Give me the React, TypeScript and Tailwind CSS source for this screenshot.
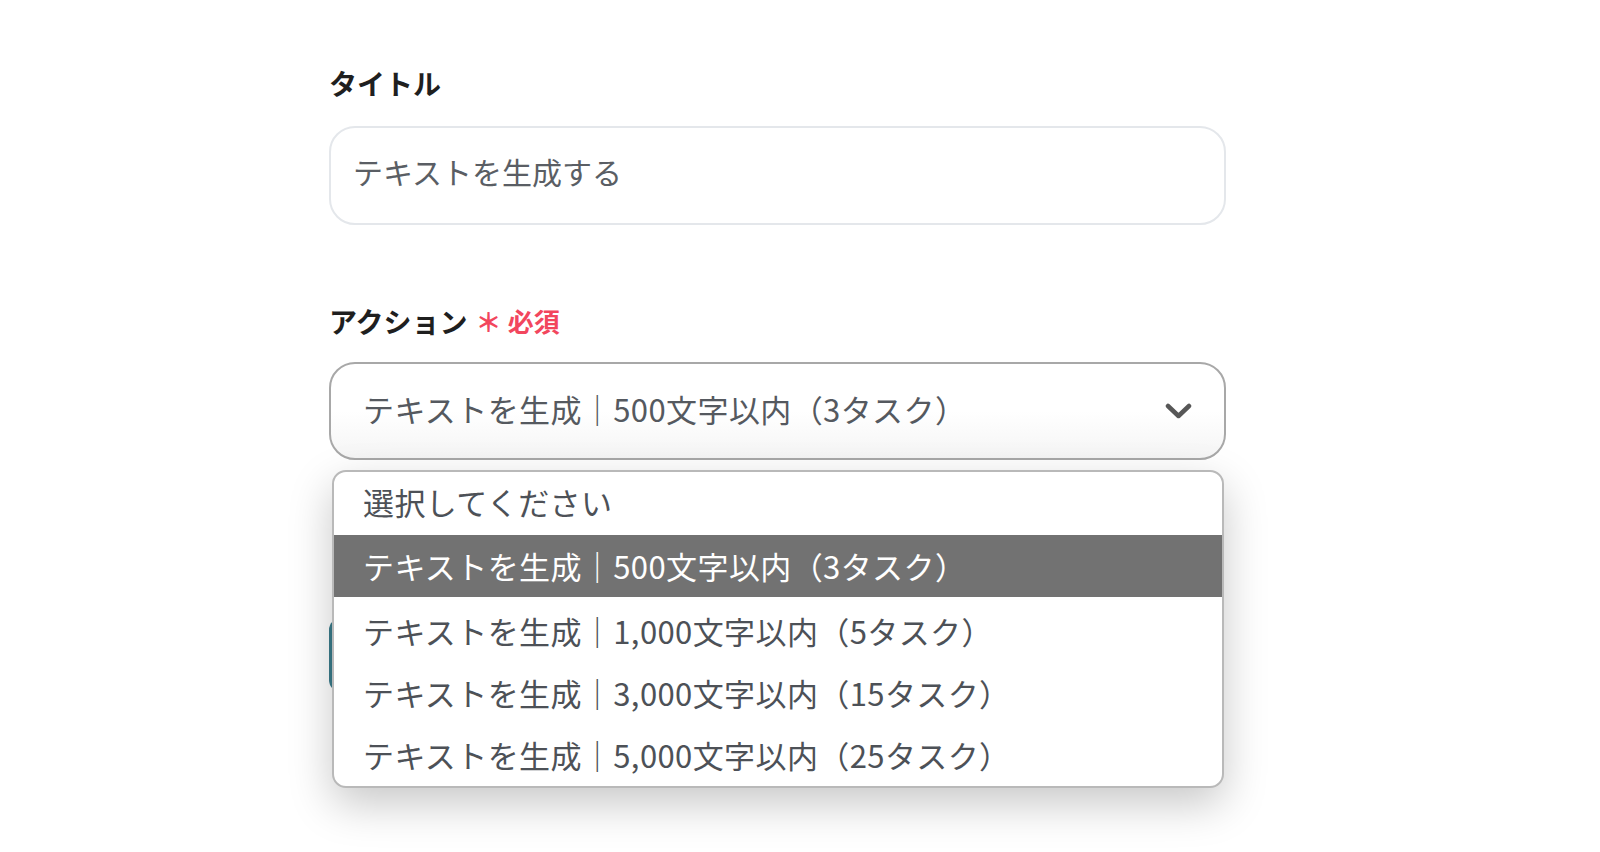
const jp = { fontFamily: '"Noto Sans CJK JP", "Noto Sans", sans-serif' };

const options = [
  "選択してください",
  "テキストを生成｜500文字以内（3タスク）",
  "テキストを生成｜1,000文字以内（5タスク）",
  "テキストを生成｜3,000文字以内（15タスク）",
  "テキストを生成｜5,000文字以内（25タスク）",
];

function Chevron() {
  return (
    <svg width="27" height="17" viewBox="0 0 27 17" fill="none">
      <polyline
        points="3,3 13.5,13 24,3"
        stroke="#575757"
        strokeWidth="4.5"
        strokeLinecap="round"
        strokeLinejoin="round"
      />
    </svg>
  );
}

export default function App() {
  const selected = 1;
  return (
    <div className="h-[852px] w-full overflow-hidden bg-white" style={jp}>
      <div className="ml-[329px] w-[897px] pt-[63px]">
        <div className="text-[28px] font-bold leading-[40px] text-[#1f1f1f]">タイトル</div>

        <div className="mt-[23px] flex h-[99px] items-center rounded-[26px] border-2 border-[#e4e7eb] bg-white px-[22px] pb-[9px] text-[30px] text-[#5a5e64]">
          テキストを生成する
        </div>

        <div className="mt-[76px] flex items-center text-[28px] font-bold leading-[40px] text-[#1f1f1f]">
          アクション
          <span className="ml-[8px] text-[26px] font-bold text-[#f2465d]">＊</span>
          <span className="ml-[6px] text-[26px] font-bold text-[#f2465d]">必須</span>
        </div>

        <div className="relative mt-[21px]">
          <div className="flex h-[98px] items-center justify-between rounded-[26px] border-2 border-[#a8a8a8] bg-gradient-to-b from-white via-white to-[#f5f5f5] pb-[4px] pl-[32px] pr-[32px] text-[31px] tracking-[0.4px] text-[#55595f]">
            <span>テキストを生成｜500文字以内（3タスク）</span>
            <span className="pt-[4px]">
              <Chevron />
            </span>
          </div>

          <div className="mt-[158px] h-[74px] w-[240px] rounded-[12px] bg-[#3a7c8b]" />

          <div className="absolute left-[3px] right-[2px] top-[108px] h-[318px] overflow-hidden rounded-[14px] border-2 border-[#b9b9b9] bg-white shadow-[0_16px_44px_rgba(0,0,0,0.22)]">
            {options.map((o, i) => (
              <div
                key={o}
                className={`flex items-center pl-[29px] text-[31px] tracking-[0.4px] ${
                  i === 0 ? "h-[63px] pb-[2px]" : "h-[62px]"
                } ${
                  i === selected
                    ? "bg-[#727272] text-white"
                    : i > 0
                    ? "pt-[6px] text-[#4d5157]"
                    : "text-[#4d5157]"
                }`}
              >
                {o}
              </div>
            ))}
          </div>
        </div>
      </div>
    </div>
  );
}
